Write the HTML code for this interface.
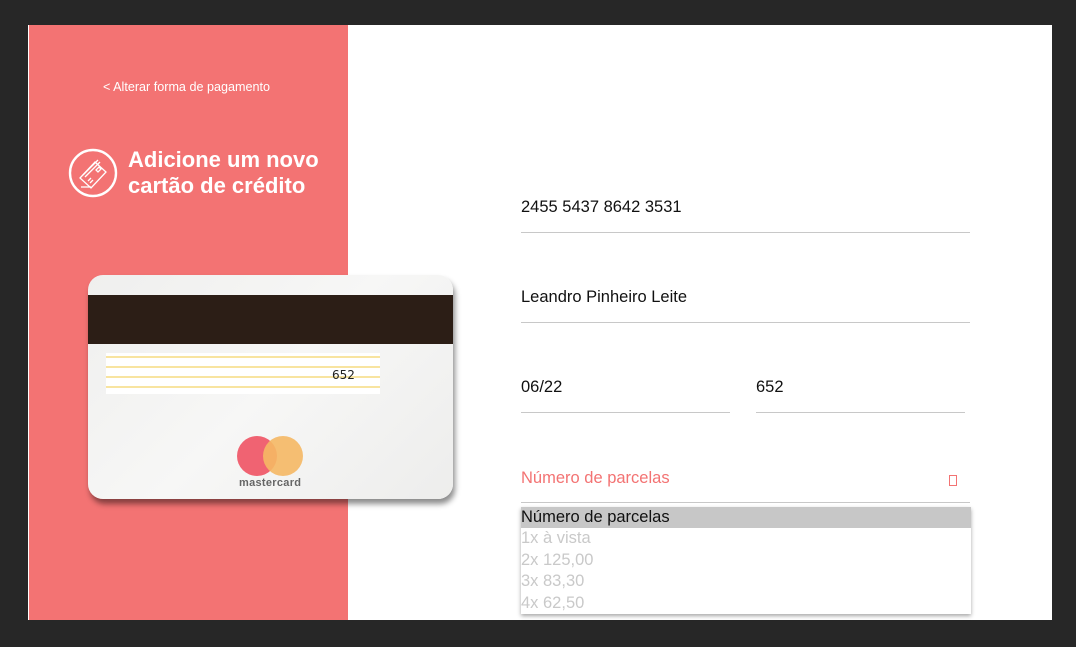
<!DOCTYPE html>
<html><head><meta charset="utf-8"><style>
*{margin:0;padding:0;box-sizing:border-box}
body{width:1076px;height:647px;background:#272727;position:relative;font-family:"Liberation Sans",Arial,sans-serif;overflow:hidden}
.frame{position:absolute;left:28px;top:25px;width:1024px;height:595px;background:#fff}
.left{position:absolute;left:1px;top:0;width:319px;height:595px;background:#f37373}
.abs{position:absolute}
.back{left:74px;top:55px;color:#fff;font-size:12.6px}
.title{left:99px;top:122px;color:#fff;font-size:22px;font-weight:bold;line-height:26px}
.card{left:60px;top:250px;width:365px;height:224px;border-radius:15px;background:linear-gradient(135deg,#efefee,#f7f7f6 50%,#ededec);box-shadow:2px 5px 6px rgba(0,0,0,.45);overflow:hidden}
.stripe{left:0;top:20px;width:365px;height:49px;background:#2c1e16}
.sig{left:18px;top:78px;width:274px;height:41px;background:repeating-linear-gradient(#fff 0 3px,#f8e4a0 3px 5px,#fff 5px 10px)}
.field{position:absolute;font-size:16.5px;color:#111}
.line{position:absolute;height:1px;background:#c8c8c8}
.dd{left:493px;top:482px;width:450px;height:107px;background:#fff;box-shadow:0 2px 4px rgba(0,0,0,.35);font-size:16.5px;color:#c9c9c9;line-height:21.4px}
</style></head><body>
<div class="frame">
<div class="left">
<div class="abs back">&lt; Alterar forma de pagamento</div>
<svg class="abs" style="left:39px;top:123px" width="50" height="50" viewBox="0 0 50 50" fill="none" stroke="#fff" stroke-width="2.4">
<circle cx="25" cy="25" r="23"/>
<g stroke-width="1.3"><path d="M12 30 L27 14 L38 24 L23 40 Z"/><path d="M15 27 L30 12"/><path d="M17 29 L32 14"/><path d="M28 22 l3 -3 l2 2 l-3 3z"/><path d="M20 33 l3 -3 M22 35 l3 -3"/><path d="M13 39 h10"/></g>
</svg>
<div class="abs title">Adicione um novo<br>cartão de crédito</div>
</div>
<div class="abs card">
<div class="abs stripe"></div>
<div class="abs sig"></div>
<div class="abs" style="left:244px;top:93px;font-size:12px;color:#222;font-family:'DejaVu Sans',sans-serif">652</div>
<div class="abs" style="left:149px;top:161px;width:40px;height:40px;border-radius:50%;background:#f06372"></div>
<div class="abs" style="left:175px;top:161px;width:40px;height:40px;border-radius:50%;background:rgba(245,184,100,.9)"></div>
<div class="abs" style="left:151px;top:202px;font-size:11px;font-weight:bold;color:#666;letter-spacing:.3px">mastercard</div>
</div>
<div class="field" style="left:493px;top:173px">2455 5437 8642 3531</div>
<div class="line" style="left:493px;top:207px;width:449px"></div>
<div class="field" style="left:493px;top:263px">Leandro Pinheiro Leite</div>
<div class="line" style="left:493px;top:297px;width:449px"></div>
<div class="field" style="left:493px;top:353px">06/22</div>
<div class="line" style="left:493px;top:387px;width:209px"></div>
<div class="field" style="left:728px;top:353px">652</div>
<div class="line" style="left:728px;top:387px;width:209px"></div>
<div class="field" style="left:493px;top:444px;color:#f37373">Número de parcelas</div>
<div class="abs" style="left:921px;top:450px;width:8px;height:11px;border:1px solid #f37373"></div>
<div class="line" style="left:493px;top:477px;width:449px"></div>
<div class="abs dd">
<div style="background:#c7c7c7;color:#111">Número de parcelas</div>
<div>1x à vista</div><div>2x 125,00</div><div>3x 83,30</div><div>4x 62,50</div>
</div>
</div>
</body></html>
